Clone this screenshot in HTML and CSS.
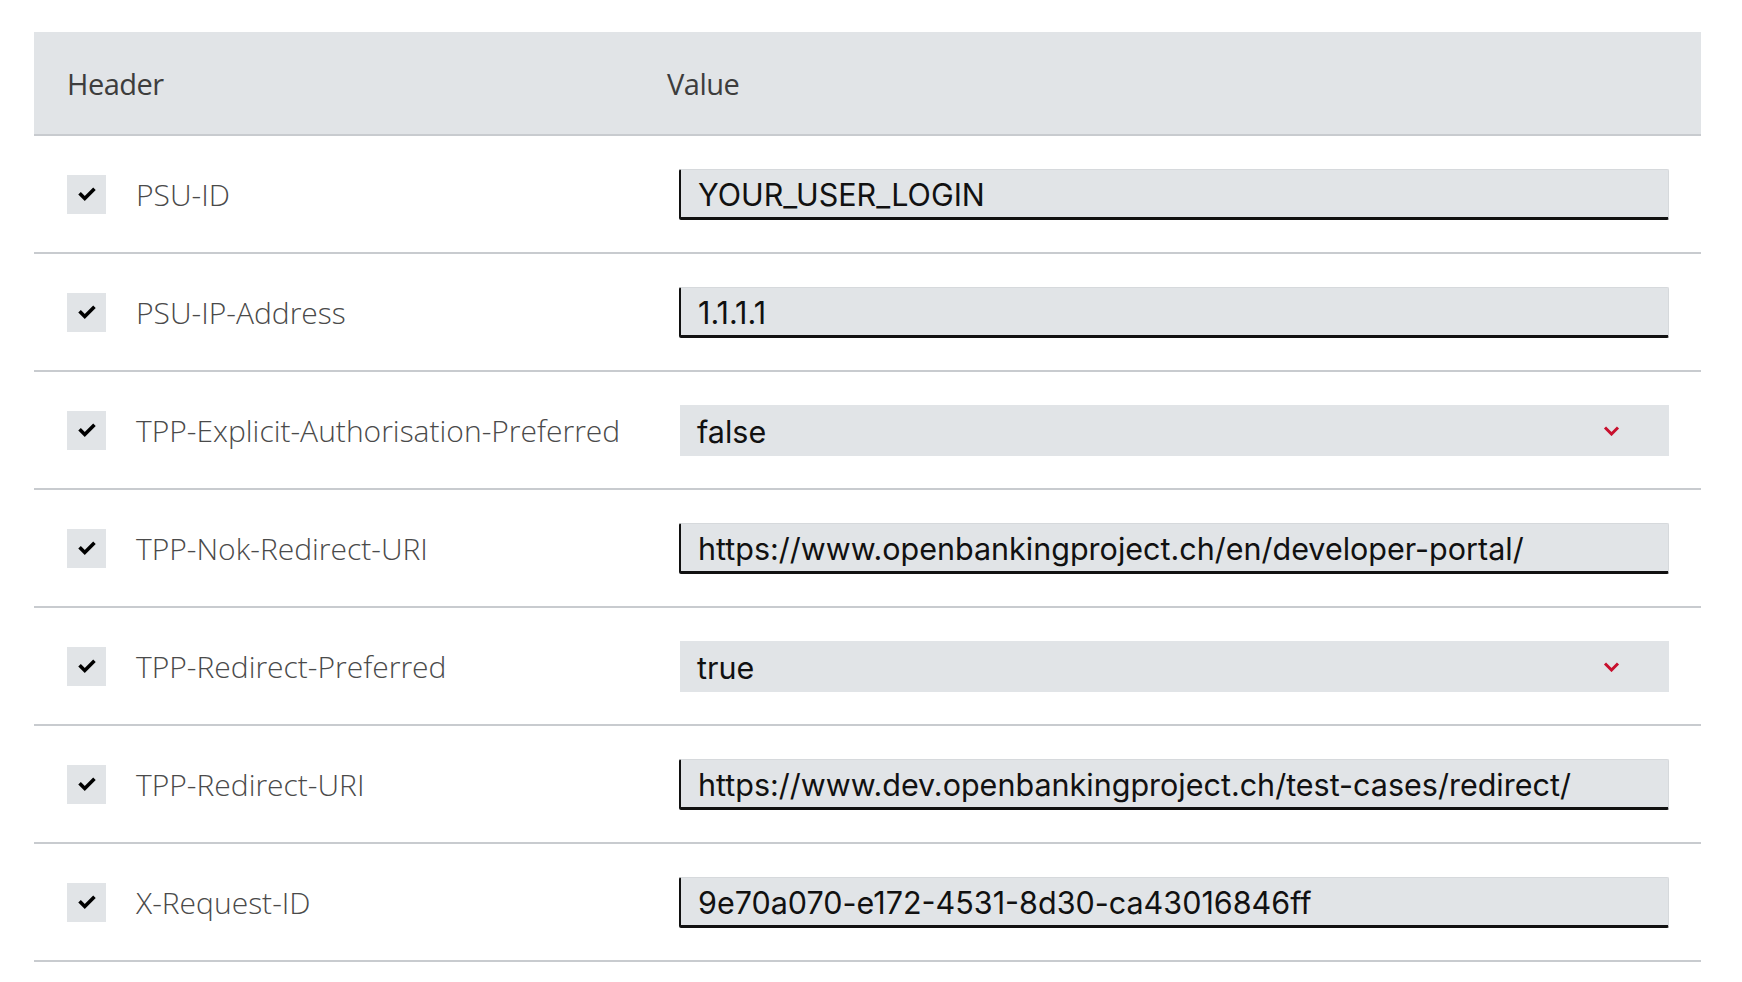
FILE: index.html
```html
<!DOCTYPE html>
<html>
<head>
<meta charset="utf-8">
<link rel="stylesheet" href="styles.css">
</head>
<body>
<div class="table">
  <div class="thead">
    <div class="th">Header</div>
    <div class="th">Value</div>
  </div>
  <div class="row">
    <div class="name"><span class="check"><svg viewBox="0 0 16 16"><path d="M2.5 8.5 L6 12 L13.5 4.5" /></svg></span>PSU-ID</div>
    <div class="val"><div class="input">YOUR_USER_LOGIN</div></div>
  </div>
  <div class="row">
    <div class="name"><span class="check"><svg viewBox="0 0 16 16"><path d="M2.5 8.5 L6 12 L13.5 4.5" /></svg></span>PSU-IP-Address</div>
    <div class="val"><div class="input">1.1.1.1</div></div>
  </div>
  <div class="row">
    <div class="name"><span class="check"><svg viewBox="0 0 16 16"><path d="M2.5 8.5 L6 12 L13.5 4.5" /></svg></span>TPP-Explicit-Authorisation-Preferred</div>
    <div class="val"><div class="select"><span>false</span><svg class="chev" viewBox="0 0 16 10"><path d="M1.5 1.5 L8 8 L14.5 1.5" /></svg></div></div>
  </div>
  <div class="row">
    <div class="name"><span class="check"><svg viewBox="0 0 16 16"><path d="M2.5 8.5 L6 12 L13.5 4.5" /></svg></span>TPP-Nok-Redirect-URI</div>
    <div class="val"><div class="input">https://www.openbankingproject.ch/en/developer-portal/</div></div>
  </div>
  <div class="row">
    <div class="name"><span class="check"><svg viewBox="0 0 16 16"><path d="M2.5 8.5 L6 12 L13.5 4.5" /></svg></span>TPP-Redirect-Preferred</div>
    <div class="val"><div class="select"><span>true</span><svg class="chev" viewBox="0 0 16 10"><path d="M1.5 1.5 L8 8 L14.5 1.5" /></svg></div></div>
  </div>
  <div class="row">
    <div class="name"><span class="check"><svg viewBox="0 0 16 16"><path d="M2.5 8.5 L6 12 L13.5 4.5" /></svg></span>TPP-Redirect-URI</div>
    <div class="val"><div class="input">https://www.dev.openbankingproject.ch/test-cases/redirect/</div></div>
  </div>
  <div class="row">
    <div class="name"><span class="check"><svg viewBox="0 0 16 16"><path d="M2.5 8.5 L6 12 L13.5 4.5" /></svg></span>X-Request-ID</div>
    <div class="val"><div class="input">9e70a070-e172-4531-8d30-ca43016846ff</div></div>
  </div>
</div>
</body>
</html>
```
FILE: styles.css
```css
html, body {
  margin: 0;
  padding: 0;
  background: #ffffff;
}
body {
  font-family: "Open Sans", "Liberation Sans", sans-serif;
}
.table {
  margin: 32px 41px 0 34px;
}
.thead {
  display: grid;
  grid-template-columns: 633px 1fr;
  height: 102px;
  align-items: center;
  background: #e1e4e7;
  border-bottom: 2px solid #c8cbcf;
}
.th {
  padding-left: 33px;
  font-size: 29px;
  color: #3d3d3d;
  letter-spacing: -0.5px;
}
.th + .th {
  padding-left: 0;
}
.row {
  display: grid;
  grid-template-columns: 633px 1fr;
  align-items: center;
  height: 116px;
  border-bottom: 2px solid #c8cbcf;
}
.name {
  display: flex;
  align-items: center;
  padding-left: 33px;
  font-size: 30px;
  font-weight: 300;
  color: #4a4a4a;
}
.check {
  width: 39px;
  height: 39px;
  background: #e1e4e7;
  display: flex;
  align-items: center;
  justify-content: center;
  margin-right: 30px;
}
.check svg {
  width: 18px;
  height: 18px;
  fill: none;
  stroke: #000;
  stroke-width: 3.2;
  stroke-linecap: square;
}
.val {
  padding-left: 12px;
  padding-right: 32px;
}
.input {
  box-sizing: border-box;
  height: 51px;
  background: #e1e4e7;
  border-left: 2px solid #111;
  border-bottom: 3px solid #111;
  border-top: 1px solid #d6d9dc;
  border-right: 1px solid #d6d9dc;
  border-radius: 2px;
  display: flex;
  align-items: center;
  padding-left: 17px;
  padding-top: 2px;
  font-family: Inter, "Liberation Sans", Arial, sans-serif;
  font-size: 30.5px;
  color: #111;
}
.select {
  box-sizing: border-box;
  height: 51px;
  margin-left: 1px;
  background: #e1e4e7;
  display: flex;
  align-items: center;
  justify-content: space-between;
  padding-left: 17px;
  padding-right: 49px;
  padding-top: 2px;
  font-family: Inter, "Liberation Sans", Arial, sans-serif;
  font-size: 30.5px;
  color: #111;
}
.chev {
  width: 17px;
  height: 10px;
  fill: none;
  stroke: #c8102e;
  stroke-width: 3;
}
```
